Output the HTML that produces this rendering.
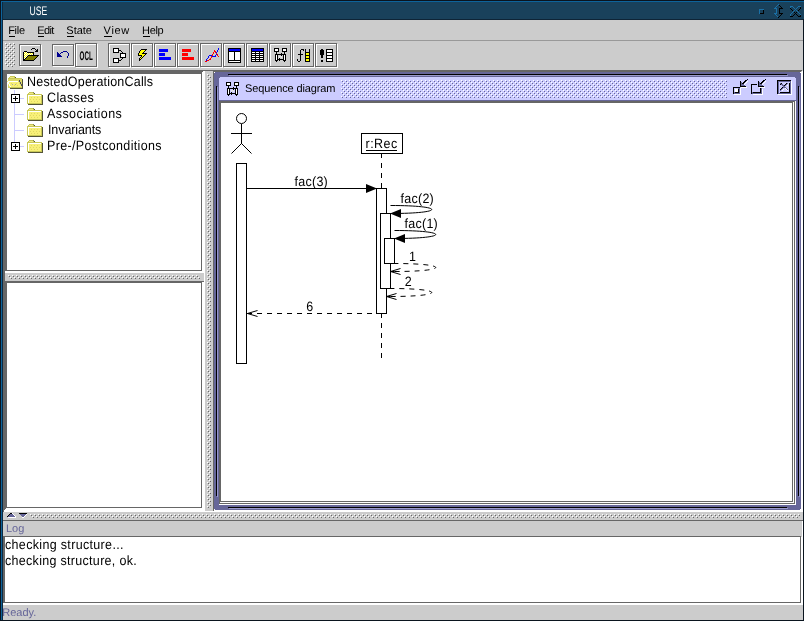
<!DOCTYPE html>
<html lang="en"><head><meta charset="utf-8"><title>USE</title>
<style>
html,body{margin:0;padding:0;background:#ccc;overflow:hidden}
#app{position:relative;width:804px;height:621px;overflow:hidden;font-family:"Liberation Sans",sans-serif}
#gfx{position:absolute;left:0;top:0;will-change:transform}
.t{position:absolute;white-space:pre;line-height:0;height:0;transform-origin:0 0;display:block}
</style></head><body>
<div id="app">
<svg id="gfx" width="804" height="621" viewBox="0 0 804 621" shape-rendering="crispEdges">
<defs>
<pattern id="bt" x="5" y="43" width="4" height="4" patternUnits="userSpaceOnUse"><rect x="0" y="0" width="1" height="1" fill="#ffffff"/><rect x="2" y="2" width="1" height="1" fill="#ffffff"/><rect x="1" y="1" width="1" height="1" fill="#666666"/><rect x="3" y="3" width="1" height="1" fill="#666666"/></pattern>
<pattern id="bh" x="8" y="275" width="4" height="4" patternUnits="userSpaceOnUse"><rect x="0" y="0" width="1" height="1" fill="#ffffff"/><rect x="2" y="2" width="1" height="1" fill="#ffffff"/><rect x="1" y="1" width="1" height="1" fill="#666666"/><rect x="3" y="3" width="1" height="1" fill="#666666"/></pattern>
<pattern id="bv" x="207" y="74" width="4" height="4" patternUnits="userSpaceOnUse"><rect x="0" y="0" width="1" height="1" fill="#ffffff"/><rect x="2" y="2" width="1" height="1" fill="#ffffff"/><rect x="1" y="1" width="1" height="1" fill="#666666"/><rect x="3" y="3" width="1" height="1" fill="#666666"/></pattern>
<pattern id="bf" x="341" y="80" width="4" height="4" patternUnits="userSpaceOnUse"><rect x="0" y="0" width="1" height="1" fill="#ffffff"/><rect x="2" y="2" width="1" height="1" fill="#ffffff"/><rect x="1" y="1" width="1" height="1" fill="#666699"/><rect x="3" y="3" width="1" height="1" fill="#666699"/></pattern>
<pattern id="bb" x="30" y="514" width="4" height="4" patternUnits="userSpaceOnUse"><rect x="0" y="0" width="1" height="1" fill="#ffffff"/><rect x="2" y="2" width="1" height="1" fill="#ffffff"/><rect x="1" y="1" width="1" height="1" fill="#666666"/><rect x="3" y="3" width="1" height="1" fill="#666666"/></pattern>
</defs>
<rect x="0" y="0" width="804" height="621" fill="#cccccc"/>
<rect x="0" y="0" width="804" height="20" fill="#19415b"/>
<rect x="0" y="0" width="804" height="1" fill="#0a141e"/>
<rect x="1" y="1" width="803" height="1" fill="#0d639b"/>
<rect x="2" y="19" width="802" height="1" fill="#0e2436"/>
<rect x="0" y="0" width="1" height="621" fill="#0a141e"/>
<rect x="1" y="1" width="1" height="620" fill="#0d639b"/>
<rect x="2" y="2" width="1" height="619" fill="#0e2a40"/>
<rect x="803" y="19" width="1" height="602" fill="#0a141e"/>
<rect x="0" y="620" width="804" height="1" fill="#0a141e"/>
<rect x="3" y="40" width="800" height="1" fill="#999999"/>
<rect x="5" y="43" width="10" height="24" fill="url(#bt)"/>
<rect x="19" y="44" width="22" height="1" fill="#666666"/>
<rect x="19" y="65" width="22" height="1" fill="#666666"/>
<rect x="19" y="44" width="1" height="22" fill="#666666"/>
<rect x="40" y="44" width="1" height="22" fill="#666666"/>
<rect x="20" y="45" width="20" height="1" fill="#ffffff"/>
<rect x="20" y="45" width="1" height="20" fill="#ffffff"/>
<rect x="20" y="66" width="22" height="1" fill="#ffffff"/>
<rect x="41" y="45" width="1" height="22" fill="#ffffff"/>
<rect x="52" y="44" width="22" height="1" fill="#666666"/>
<rect x="52" y="65" width="22" height="1" fill="#666666"/>
<rect x="52" y="44" width="1" height="22" fill="#666666"/>
<rect x="73" y="44" width="1" height="22" fill="#666666"/>
<rect x="53" y="45" width="20" height="1" fill="#ffffff"/>
<rect x="53" y="45" width="1" height="20" fill="#ffffff"/>
<rect x="53" y="66" width="22" height="1" fill="#ffffff"/>
<rect x="74" y="45" width="1" height="22" fill="#ffffff"/>
<rect x="75" y="43" width="22" height="1" fill="#666666"/>
<rect x="75" y="66" width="22" height="1" fill="#666666"/>
<rect x="75" y="43" width="1" height="24" fill="#666666"/>
<rect x="96" y="43" width="1" height="24" fill="#666666"/>
<rect x="76" y="44" width="20" height="1" fill="#ffffff"/>
<rect x="76" y="44" width="1" height="22" fill="#ffffff"/>
<rect x="76" y="67" width="22" height="1" fill="#ffffff"/>
<rect x="97" y="44" width="1" height="24" fill="#ffffff"/>
<rect x="108" y="43" width="22" height="1" fill="#666666"/>
<rect x="108" y="66" width="22" height="1" fill="#666666"/>
<rect x="108" y="43" width="1" height="24" fill="#666666"/>
<rect x="129" y="43" width="1" height="24" fill="#666666"/>
<rect x="109" y="44" width="20" height="1" fill="#ffffff"/>
<rect x="109" y="44" width="1" height="22" fill="#ffffff"/>
<rect x="109" y="67" width="22" height="1" fill="#ffffff"/>
<rect x="130" y="44" width="1" height="24" fill="#ffffff"/>
<rect x="131" y="43" width="22" height="1" fill="#666666"/>
<rect x="131" y="66" width="22" height="1" fill="#666666"/>
<rect x="131" y="43" width="1" height="24" fill="#666666"/>
<rect x="152" y="43" width="1" height="24" fill="#666666"/>
<rect x="132" y="44" width="20" height="1" fill="#ffffff"/>
<rect x="132" y="44" width="1" height="22" fill="#ffffff"/>
<rect x="132" y="67" width="22" height="1" fill="#ffffff"/>
<rect x="153" y="44" width="1" height="24" fill="#ffffff"/>
<rect x="154" y="43" width="22" height="1" fill="#666666"/>
<rect x="154" y="66" width="22" height="1" fill="#666666"/>
<rect x="154" y="43" width="1" height="24" fill="#666666"/>
<rect x="175" y="43" width="1" height="24" fill="#666666"/>
<rect x="155" y="44" width="20" height="1" fill="#ffffff"/>
<rect x="155" y="44" width="1" height="22" fill="#ffffff"/>
<rect x="155" y="67" width="22" height="1" fill="#ffffff"/>
<rect x="176" y="44" width="1" height="24" fill="#ffffff"/>
<rect x="177" y="43" width="22" height="1" fill="#666666"/>
<rect x="177" y="66" width="22" height="1" fill="#666666"/>
<rect x="177" y="43" width="1" height="24" fill="#666666"/>
<rect x="198" y="43" width="1" height="24" fill="#666666"/>
<rect x="178" y="44" width="20" height="1" fill="#ffffff"/>
<rect x="178" y="44" width="1" height="22" fill="#ffffff"/>
<rect x="178" y="67" width="22" height="1" fill="#ffffff"/>
<rect x="199" y="44" width="1" height="24" fill="#ffffff"/>
<rect x="200" y="43" width="22" height="1" fill="#666666"/>
<rect x="200" y="66" width="22" height="1" fill="#666666"/>
<rect x="200" y="43" width="1" height="24" fill="#666666"/>
<rect x="221" y="43" width="1" height="24" fill="#666666"/>
<rect x="201" y="44" width="20" height="1" fill="#ffffff"/>
<rect x="201" y="44" width="1" height="22" fill="#ffffff"/>
<rect x="201" y="67" width="22" height="1" fill="#ffffff"/>
<rect x="222" y="44" width="1" height="24" fill="#ffffff"/>
<rect x="223" y="43" width="22" height="1" fill="#666666"/>
<rect x="223" y="66" width="22" height="1" fill="#666666"/>
<rect x="223" y="43" width="1" height="24" fill="#666666"/>
<rect x="244" y="43" width="1" height="24" fill="#666666"/>
<rect x="224" y="44" width="20" height="1" fill="#ffffff"/>
<rect x="224" y="44" width="1" height="22" fill="#ffffff"/>
<rect x="224" y="67" width="22" height="1" fill="#ffffff"/>
<rect x="245" y="44" width="1" height="24" fill="#ffffff"/>
<rect x="246" y="43" width="22" height="1" fill="#666666"/>
<rect x="246" y="66" width="22" height="1" fill="#666666"/>
<rect x="246" y="43" width="1" height="24" fill="#666666"/>
<rect x="267" y="43" width="1" height="24" fill="#666666"/>
<rect x="247" y="44" width="20" height="1" fill="#ffffff"/>
<rect x="247" y="44" width="1" height="22" fill="#ffffff"/>
<rect x="247" y="67" width="22" height="1" fill="#ffffff"/>
<rect x="268" y="44" width="1" height="24" fill="#ffffff"/>
<rect x="269" y="43" width="22" height="1" fill="#666666"/>
<rect x="269" y="66" width="22" height="1" fill="#666666"/>
<rect x="269" y="43" width="1" height="24" fill="#666666"/>
<rect x="290" y="43" width="1" height="24" fill="#666666"/>
<rect x="270" y="44" width="20" height="1" fill="#ffffff"/>
<rect x="270" y="44" width="1" height="22" fill="#ffffff"/>
<rect x="270" y="67" width="22" height="1" fill="#ffffff"/>
<rect x="291" y="44" width="1" height="24" fill="#ffffff"/>
<rect x="292" y="43" width="22" height="1" fill="#666666"/>
<rect x="292" y="66" width="22" height="1" fill="#666666"/>
<rect x="292" y="43" width="1" height="24" fill="#666666"/>
<rect x="313" y="43" width="1" height="24" fill="#666666"/>
<rect x="293" y="44" width="20" height="1" fill="#ffffff"/>
<rect x="293" y="44" width="1" height="22" fill="#ffffff"/>
<rect x="293" y="67" width="22" height="1" fill="#ffffff"/>
<rect x="314" y="44" width="1" height="24" fill="#ffffff"/>
<rect x="315" y="43" width="22" height="1" fill="#666666"/>
<rect x="315" y="66" width="22" height="1" fill="#666666"/>
<rect x="315" y="43" width="1" height="24" fill="#666666"/>
<rect x="336" y="43" width="1" height="24" fill="#666666"/>
<rect x="316" y="44" width="20" height="1" fill="#ffffff"/>
<rect x="316" y="44" width="1" height="22" fill="#ffffff"/>
<rect x="316" y="67" width="22" height="1" fill="#ffffff"/>
<rect x="337" y="44" width="1" height="24" fill="#ffffff"/>
<rect x="24" y="51" width="3" height="1" fill="#000000"/>
<rect x="23" y="52" width="1" height="9" fill="#000000"/>
<rect x="27" y="52" width="7" height="1" fill="#000000"/>
<rect x="33" y="52" width="1" height="4" fill="#000000"/>
<rect x="24" y="52" width="3" height="7" fill="#ffff00"/>
<rect x="27" y="53" width="6" height="2" fill="#ffff00"/>
<rect x="24" y="52" width="1" height="1" fill="#ffffff"/>
<rect x="26" y="52" width="1" height="1" fill="#ffffff"/>
<rect x="25" y="53" width="1" height="1" fill="#ffffff"/>
<rect x="27" y="53" width="1" height="1" fill="#ffffff"/>
<rect x="29" y="53" width="1" height="1" fill="#ffffff"/>
<rect x="31" y="53" width="1" height="1" fill="#ffffff"/>
<rect x="24" y="54" width="1" height="1" fill="#ffffff"/>
<rect x="26" y="54" width="1" height="1" fill="#ffffff"/>
<rect x="28" y="54" width="1" height="1" fill="#ffffff"/>
<rect x="30" y="54" width="1" height="1" fill="#ffffff"/>
<rect x="32" y="54" width="1" height="1" fill="#ffffff"/>
<rect x="25" y="55" width="1" height="1" fill="#ffffff"/>
<rect x="24" y="56" width="1" height="1" fill="#ffffff"/>
<rect x="26" y="56" width="1" height="1" fill="#ffffff"/>
<rect x="25" y="57" width="1" height="1" fill="#ffffff"/>
<rect x="24" y="58" width="1" height="1" fill="#ffffff"/>
<rect x="28" y="55" width="11" height="1" fill="#000000"/>
<rect x="28" y="56" width="9" height="1" fill="#808000"/>
<rect x="27" y="56" width="1" height="1" fill="#000000"/>
<rect x="37" y="56" width="1" height="1" fill="#000000"/>
<rect x="27" y="57" width="9" height="1" fill="#808000"/>
<rect x="26" y="57" width="1" height="1" fill="#000000"/>
<rect x="36" y="57" width="1" height="1" fill="#000000"/>
<rect x="26" y="58" width="9" height="1" fill="#808000"/>
<rect x="25" y="58" width="1" height="1" fill="#000000"/>
<rect x="35" y="58" width="1" height="1" fill="#000000"/>
<rect x="25" y="59" width="9" height="1" fill="#808000"/>
<rect x="24" y="59" width="1" height="1" fill="#000000"/>
<rect x="34" y="59" width="1" height="1" fill="#000000"/>
<rect x="23" y="60" width="11" height="1" fill="#000000"/>
<rect x="31" y="49" width="1" height="1" fill="#000000"/>
<rect x="32" y="48" width="3" height="1" fill="#000000"/>
<rect x="35" y="49" width="1" height="1" fill="#000000"/>
<rect x="37" y="49" width="1" height="1" fill="#000000"/>
<rect x="36" y="50" width="2" height="1" fill="#000000"/>
<rect x="35" y="51" width="3" height="1" fill="#000000"/>
<rect x="57" y="52" width="1" height="1" fill="#000090"/>
<rect x="57" y="53" width="2" height="1" fill="#000090"/>
<rect x="57" y="54" width="3" height="1" fill="#000090"/>
<rect x="57" y="55" width="4" height="1" fill="#000090"/>
<rect x="57" y="56" width="5" height="1" fill="#000090"/>
<rect x="60" y="53" width="1" height="1" fill="#000090"/>
<rect x="61" y="52" width="1" height="1" fill="#000090"/>
<rect x="62" y="52" width="1" height="1" fill="#000090"/>
<rect x="63" y="51" width="4" height="1" fill="#000090"/>
<rect x="67" y="52" width="1" height="1" fill="#000090"/>
<rect x="68" y="53" width="1" height="3" fill="#000090"/>
<rect x="67" y="56" width="1" height="2" fill="#000090"/>
<rect x="113" y="48" width="6" height="5" fill="#ffffff"/>
<rect x="113" y="48" width="6" height="1" fill="#000000"/>
<rect x="113" y="52" width="6" height="1" fill="#000000"/>
<rect x="113" y="48" width="1" height="5" fill="#000000"/>
<rect x="118" y="48" width="1" height="5" fill="#000000"/>
<rect x="120" y="53" width="6" height="5" fill="#ffffff"/>
<rect x="120" y="53" width="6" height="1" fill="#000000"/>
<rect x="120" y="57" width="6" height="1" fill="#000000"/>
<rect x="120" y="53" width="1" height="5" fill="#000000"/>
<rect x="125" y="53" width="1" height="5" fill="#000000"/>
<rect x="113" y="58" width="6" height="5" fill="#ffffff"/>
<rect x="113" y="58" width="6" height="1" fill="#000000"/>
<rect x="113" y="62" width="6" height="1" fill="#000000"/>
<rect x="113" y="58" width="1" height="5" fill="#000000"/>
<rect x="118" y="58" width="1" height="5" fill="#000000"/>
<rect x="119" y="50" width="1" height="1" fill="#000000"/>
<rect x="120" y="50" width="1" height="1" fill="#000000"/>
<rect x="121" y="51" width="1" height="1" fill="#000000"/>
<rect x="122" y="52" width="1" height="1" fill="#000000"/>
<rect x="119" y="60" width="1" height="1" fill="#000000"/>
<rect x="120" y="60" width="1" height="1" fill="#000000"/>
<rect x="121" y="59" width="1" height="1" fill="#000000"/>
<rect x="122" y="58" width="1" height="1" fill="#000000"/>
<rect x="141" y="49" width="6" height="1" fill="#000000"/>
<rect x="140" y="50" width="1" height="1" fill="#000000"/>
<rect x="141" y="50" width="4" height="1" fill="#ffff00"/>
<rect x="145" y="50" width="1" height="1" fill="#000000"/>
<rect x="139" y="51" width="1" height="1" fill="#000000"/>
<rect x="140" y="51" width="4" height="1" fill="#ffff00"/>
<rect x="144" y="51" width="1" height="1" fill="#000000"/>
<rect x="139" y="52" width="1" height="1" fill="#000000"/>
<rect x="140" y="52" width="3" height="1" fill="#ffff00"/>
<rect x="143" y="52" width="1" height="1" fill="#000000"/>
<rect x="138" y="53" width="1" height="1" fill="#000000"/>
<rect x="139" y="53" width="3" height="1" fill="#ffff00"/>
<rect x="142" y="53" width="5" height="1" fill="#000000"/>
<rect x="138" y="54" width="1" height="1" fill="#000000"/>
<rect x="139" y="54" width="6" height="1" fill="#ffff00"/>
<rect x="145" y="54" width="1" height="1" fill="#000000"/>
<rect x="138" y="55" width="4" height="1" fill="#000000"/>
<rect x="142" y="55" width="2" height="1" fill="#ffff00"/>
<rect x="144" y="55" width="1" height="1" fill="#000000"/>
<rect x="141" y="56" width="1" height="1" fill="#000000"/>
<rect x="142" y="56" width="1" height="1" fill="#ffff00"/>
<rect x="143" y="56" width="1" height="1" fill="#000000"/>
<rect x="140" y="57" width="1" height="1" fill="#000000"/>
<rect x="141" y="57" width="1" height="1" fill="#ffff00"/>
<rect x="142" y="57" width="1" height="1" fill="#000000"/>
<rect x="139" y="58" width="1" height="1" fill="#000000"/>
<rect x="140" y="58" width="1" height="1" fill="#ffff00"/>
<rect x="141" y="58" width="1" height="1" fill="#000000"/>
<rect x="139" y="59" width="2" height="1" fill="#000000"/>
<rect x="139" y="60" width="1" height="1" fill="#000000"/>
<rect x="159" y="49" width="9" height="3" fill="#0000ff"/>
<rect x="159" y="53" width="6" height="3" fill="#0000ff"/>
<rect x="159" y="57" width="12" height="3" fill="#0000ff"/>
<rect x="182" y="49" width="9" height="3" fill="#ff0000"/>
<rect x="182" y="53" width="6" height="3" fill="#ff0000"/>
<rect x="182" y="57" width="12" height="3" fill="#ff0000"/>
<rect x="218" y="48" width="1" height="1" fill="#0000ff"/>
<rect x="218" y="49" width="1" height="1" fill="#0000ff"/>
<rect x="217" y="50" width="1" height="1" fill="#0000ff"/>
<rect x="217" y="51" width="1" height="1" fill="#0000ff"/>
<rect x="216" y="52" width="1" height="1" fill="#0000ff"/>
<rect x="216" y="54" width="1" height="1" fill="#0000ff"/>
<rect x="215" y="55" width="1" height="1" fill="#0000ff"/>
<rect x="215" y="56" width="1" height="1" fill="#0000ff"/>
<rect x="212" y="56" width="1" height="1" fill="#0000ff"/>
<rect x="213" y="56" width="1" height="1" fill="#0000ff"/>
<rect x="214" y="56" width="1" height="1" fill="#0000ff"/>
<rect x="209" y="55" width="1" height="1" fill="#0000ff"/>
<rect x="210" y="55" width="1" height="1" fill="#0000ff"/>
<rect x="211" y="55" width="1" height="1" fill="#0000ff"/>
<rect x="208" y="56" width="1" height="1" fill="#0000ff"/>
<rect x="208" y="57" width="1" height="1" fill="#0000ff"/>
<rect x="207" y="58" width="1" height="1" fill="#0000ff"/>
<rect x="206" y="59" width="1" height="1" fill="#0000ff"/>
<rect x="206" y="60" width="1" height="1" fill="#0000ff"/>
<rect x="205" y="61" width="1" height="1" fill="#ff0000"/>
<rect x="206" y="61" width="1" height="1" fill="#ff0000"/>
<rect x="207" y="60" width="1" height="1" fill="#ff0000"/>
<rect x="208" y="60" width="1" height="1" fill="#ff0000"/>
<rect x="209" y="59" width="1" height="1" fill="#ff0000"/>
<rect x="210" y="59" width="1" height="1" fill="#ff0000"/>
<rect x="210" y="58" width="1" height="1" fill="#ff0000"/>
<rect x="211" y="57" width="1" height="1" fill="#ff0000"/>
<rect x="211" y="56" width="1" height="1" fill="#ff0000"/>
<rect x="212" y="55" width="1" height="1" fill="#ff0000"/>
<rect x="212" y="54" width="1" height="1" fill="#ff0000"/>
<rect x="213" y="53" width="1" height="1" fill="#ff0000"/>
<rect x="213" y="52" width="1" height="1" fill="#ff0000"/>
<rect x="214" y="51" width="1" height="1" fill="#ff0000"/>
<rect x="214" y="50" width="1" height="1" fill="#ff0000"/>
<rect x="215" y="51" width="1" height="1" fill="#ff0000"/>
<rect x="215" y="52" width="1" height="1" fill="#ff0000"/>
<rect x="216" y="53" width="1" height="1" fill="#ff0000"/>
<rect x="217" y="54" width="1" height="1" fill="#ff0000"/>
<rect x="217" y="55" width="1" height="1" fill="#ff0000"/>
<rect x="218" y="56" width="1" height="1" fill="#ff0000"/>
<rect x="228" y="48" width="13" height="15" fill="#ffffff"/>
<rect x="228" y="48" width="13" height="1" fill="#000000"/>
<rect x="228" y="62" width="13" height="1" fill="#000000"/>
<rect x="228" y="48" width="1" height="15" fill="#000000"/>
<rect x="240" y="48" width="1" height="15" fill="#000000"/>
<rect x="229" y="49" width="11" height="2" fill="#0000ff"/>
<rect x="228" y="51" width="13" height="1" fill="#000000"/>
<rect x="234" y="51" width="1" height="10" fill="#000000"/>
<rect x="228" y="60" width="13" height="1" fill="#000000"/>
<rect x="251" y="48" width="13" height="14" fill="#000000"/>
<rect x="252" y="49" width="11" height="2" fill="#0000ff"/>
<rect x="252" y="52" width="3" height="1" fill="#ffffff"/>
<rect x="252" y="54" width="3" height="1" fill="#ffffff"/>
<rect x="252" y="56" width="3" height="1" fill="#ffffff"/>
<rect x="252" y="58" width="3" height="1" fill="#ffffff"/>
<rect x="252" y="60" width="3" height="1" fill="#ffffff"/>
<rect x="256" y="52" width="3" height="1" fill="#ffffff"/>
<rect x="256" y="54" width="3" height="1" fill="#ffffff"/>
<rect x="256" y="56" width="3" height="1" fill="#ffffff"/>
<rect x="256" y="58" width="3" height="1" fill="#ffffff"/>
<rect x="256" y="60" width="3" height="1" fill="#ffffff"/>
<rect x="260" y="52" width="3" height="1" fill="#ffffff"/>
<rect x="260" y="54" width="3" height="1" fill="#ffffff"/>
<rect x="260" y="56" width="3" height="1" fill="#ffffff"/>
<rect x="260" y="58" width="3" height="1" fill="#ffffff"/>
<rect x="260" y="60" width="3" height="1" fill="#ffffff"/>
<rect x="274" y="48" width="5" height="4" fill="#ffffff"/>
<rect x="274" y="48" width="5" height="1" fill="#000000"/>
<rect x="274" y="51" width="5" height="1" fill="#000000"/>
<rect x="274" y="48" width="1" height="4" fill="#000000"/>
<rect x="278" y="48" width="1" height="4" fill="#000000"/>
<rect x="282" y="48" width="5" height="4" fill="#ffffff"/>
<rect x="282" y="48" width="5" height="1" fill="#000000"/>
<rect x="282" y="51" width="5" height="1" fill="#000000"/>
<rect x="282" y="48" width="1" height="4" fill="#000000"/>
<rect x="286" y="48" width="1" height="4" fill="#000000"/>
<rect x="276" y="52" width="1" height="2" fill="#000000"/>
<rect x="275" y="54" width="3" height="7" fill="#000000"/>
<rect x="276" y="55" width="1" height="5" fill="#ffffff"/>
<rect x="276" y="61" width="1" height="1" fill="#000000"/>
<rect x="284" y="52" width="1" height="2" fill="#000000"/>
<rect x="283" y="54" width="3" height="7" fill="#000000"/>
<rect x="284" y="55" width="1" height="5" fill="#ffffff"/>
<rect x="284" y="61" width="1" height="1" fill="#000000"/>
<rect x="278" y="54" width="5" height="1" fill="#000000"/>
<rect x="281" y="53" width="1" height="1" fill="#000000"/>
<rect x="281" y="55" width="1" height="1" fill="#000000"/>
<rect x="278" y="59" width="5" height="1" fill="#000000"/>
<rect x="279" y="58" width="1" height="1" fill="#000000"/>
<rect x="279" y="60" width="1" height="1" fill="#000000"/>
<rect x="279" y="56" width="1" height="1" fill="#e6e6e6"/>
<rect x="280" y="56" width="1" height="1" fill="#e6e6e6"/>
<rect x="281" y="56" width="1" height="1" fill="#e6e6e6"/>
<rect x="279" y="57" width="1" height="1" fill="#e6e6e6"/>
<rect x="281" y="57" width="1" height="1" fill="#e6e6e6"/>
<rect x="301" y="49" width="3" height="1" fill="#000000"/>
<rect x="303" y="50" width="1" height="1" fill="#000000"/>
<rect x="300" y="50" width="1" height="11" fill="#000000"/>
<rect x="298" y="54" width="5" height="1" fill="#000000"/>
<rect x="299" y="61" width="1" height="1" fill="#000000"/>
<rect x="298" y="61" width="1" height="1" fill="#000000"/>
<rect x="297" y="60" width="1" height="1" fill="#000000"/>
<rect x="297" y="59" width="1" height="1" fill="#000000"/>
<rect x="305" y="49" width="1" height="13" fill="#000000"/>
<rect x="309" y="49" width="1" height="13" fill="#000000"/>
<rect x="305" y="52" width="5" height="1" fill="#000000"/>
<rect x="305" y="55" width="5" height="1" fill="#000000"/>
<rect x="305" y="58" width="5" height="1" fill="#000000"/>
<rect x="305" y="61" width="5" height="1" fill="#000000"/>
<rect x="306" y="53" width="3" height="2" fill="#ffff00"/>
<rect x="306" y="56" width="3" height="2" fill="#ffff00"/>
<rect x="306" y="59" width="3" height="2" fill="#ffff00"/>
<rect x="321" y="49" width="2" height="1" fill="#000000"/>
<rect x="320" y="50" width="4" height="5" fill="#000000"/>
<rect x="321" y="55" width="2" height="3" fill="#000000"/>
<rect x="321" y="60" width="2" height="2" fill="#000000"/>
<rect x="326" y="49" width="7" height="13" fill="#ffffff"/>
<rect x="326" y="49" width="7" height="1" fill="#000000"/>
<rect x="326" y="61" width="7" height="1" fill="#000000"/>
<rect x="326" y="49" width="1" height="13" fill="#000000"/>
<rect x="332" y="49" width="1" height="13" fill="#000000"/>
<rect x="326" y="52" width="7" height="1" fill="#000000"/>
<rect x="326" y="55" width="7" height="1" fill="#000000"/>
<rect x="326" y="58" width="7" height="1" fill="#000000"/>
<rect x="3" y="70" width="799" height="1" fill="#666666"/>
<rect x="3" y="70" width="202" height="442" fill="#666666"/>
<rect x="7" y="74" width="198" height="198" fill="#ffffff"/>
<rect x="5" y="271" width="200" height="2" fill="#ffffff"/>
<rect x="201" y="74" width="1" height="197" fill="#666666"/>
<rect x="7" y="270" width="195" height="1" fill="#666666"/>
<rect x="202" y="71" width="3" height="3" fill="#ffffff"/>
<rect x="202" y="71" width="1" height="1" fill="#666666"/>
<rect x="5" y="273" width="199" height="8" fill="#cccccc"/>
<rect x="204" y="273" width="1" height="8" fill="#ffffff"/>
<rect x="8" y="275" width="192" height="4" fill="url(#bh)"/>
<rect x="5" y="281" width="199" height="1" fill="#666666"/>
<rect x="5" y="282" width="197" height="1" fill="#666666"/>
<rect x="7" y="283" width="198" height="229" fill="#ffffff"/>
<rect x="201" y="283" width="1" height="225" fill="#666666"/>
<rect x="7" y="507" width="195" height="1" fill="#666666"/>
<rect x="204" y="281" width="1" height="2" fill="#ffffff"/>
<rect x="203" y="282" width="1" height="1" fill="#ffffff"/>
<rect x="202" y="282" width="1" height="1" fill="#ffffff"/>
<rect x="6" y="508" width="199" height="1" fill="#ffffff"/>
<rect x="5" y="509" width="200" height="1" fill="#ffffff"/>
<rect x="4" y="510" width="201" height="1" fill="#ffffff"/>
<rect x="4" y="511" width="201" height="1" fill="#ffffff"/>
<rect x="205" y="71" width="8" height="440" fill="#cccccc"/>
<rect x="205" y="511" width="8" height="1" fill="#ffffff"/>
<rect x="207" y="74" width="4" height="434" fill="url(#bv)"/>
<rect x="213" y="71" width="1" height="439" fill="#666666"/>
<rect x="213" y="71" width="588" height="1" fill="#666666"/>
<rect x="214" y="72" width="587" height="438" fill="#666699"/>
<rect x="801" y="72" width="1" height="439" fill="#ffffff"/>
<rect x="214" y="510" width="588" height="1" fill="#ffffff"/>
<rect x="802" y="71" width="1" height="441" fill="#ffffff"/>
<rect x="205" y="511" width="598" height="1" fill="#ffffff"/>
<rect x="213" y="510" width="1" height="1" fill="#666666"/>
<rect x="214" y="72" width="1" height="1" fill="#ffffff"/>
<rect x="800" y="72" width="1" height="1" fill="#ffffff"/>
<rect x="214" y="509" width="1" height="1" fill="#ffffff"/>
<rect x="800" y="509" width="1" height="1" fill="#ffffff"/>
<rect x="228" y="74" width="559" height="1" fill="#000000"/>
<rect x="229" y="75" width="559" height="1" fill="#9999cc"/>
<rect x="216" y="86" width="1" height="410" fill="#000000"/>
<rect x="217" y="87" width="1" height="410" fill="#9999cc"/>
<rect x="798" y="86" width="1" height="410" fill="#000000"/>
<rect x="799" y="87" width="1" height="410" fill="#9999cc"/>
<rect x="228" y="507" width="559" height="1" fill="#000000"/>
<rect x="229" y="508" width="559" height="1" fill="#9999cc"/>
<rect x="219" y="77" width="577" height="24" fill="#ccccff"/>
<rect x="219" y="100" width="577" height="1" fill="#666699"/>
<rect x="219" y="77" width="1" height="1" fill="#666699"/>
<rect x="795" y="77" width="1" height="1" fill="#666699"/>
<rect x="341" y="80" width="386" height="18" fill="url(#bf)"/>
<rect x="219" y="101" width="577" height="404" fill="#ffffff"/>
<rect x="219" y="101" width="576" height="1" fill="#666666"/>
<rect x="219" y="101" width="1" height="403" fill="#666666"/>
<rect x="219" y="503" width="576" height="1" fill="#666666"/>
<rect x="794" y="101" width="1" height="403" fill="#666666"/>
<rect x="220" y="102" width="573" height="1" fill="#666666"/>
<rect x="220" y="102" width="1" height="400" fill="#666666"/>
<rect x="220" y="501" width="573" height="1" fill="#666666"/>
<rect x="792" y="102" width="1" height="400" fill="#666666"/>
<rect x="226" y="82" width="5" height="4" fill="#ffffff"/>
<rect x="226" y="82" width="5" height="1" fill="#000000"/>
<rect x="226" y="85" width="5" height="1" fill="#000000"/>
<rect x="226" y="82" width="1" height="4" fill="#000000"/>
<rect x="230" y="82" width="1" height="4" fill="#000000"/>
<rect x="234" y="82" width="5" height="4" fill="#ffffff"/>
<rect x="234" y="82" width="5" height="1" fill="#000000"/>
<rect x="234" y="85" width="5" height="1" fill="#000000"/>
<rect x="234" y="82" width="1" height="4" fill="#000000"/>
<rect x="238" y="82" width="1" height="4" fill="#000000"/>
<rect x="228" y="86" width="1" height="2" fill="#000000"/>
<rect x="227" y="88" width="3" height="7" fill="#000000"/>
<rect x="228" y="89" width="1" height="5" fill="#ffffff"/>
<rect x="228" y="95" width="1" height="1" fill="#000000"/>
<rect x="236" y="86" width="1" height="2" fill="#000000"/>
<rect x="235" y="88" width="3" height="7" fill="#000000"/>
<rect x="236" y="89" width="1" height="5" fill="#ffffff"/>
<rect x="236" y="95" width="1" height="1" fill="#000000"/>
<rect x="230" y="88" width="5" height="1" fill="#000000"/>
<rect x="233" y="87" width="1" height="1" fill="#000000"/>
<rect x="233" y="89" width="1" height="1" fill="#000000"/>
<rect x="230" y="93" width="5" height="1" fill="#000000"/>
<rect x="231" y="92" width="1" height="1" fill="#000000"/>
<rect x="231" y="94" width="1" height="1" fill="#000000"/>
<rect x="231" y="90" width="1" height="1" fill="#e6e6e6"/>
<rect x="232" y="90" width="1" height="1" fill="#e6e6e6"/>
<rect x="233" y="90" width="1" height="1" fill="#e6e6e6"/>
<rect x="231" y="91" width="1" height="1" fill="#e6e6e6"/>
<rect x="233" y="91" width="1" height="1" fill="#e6e6e6"/>
<rect x="734" y="88" width="5" height="5" fill="#666699"/>
<rect x="733" y="87" width="7" height="1" fill="#000000"/>
<rect x="733" y="87" width="1" height="7" fill="#000000"/>
<rect x="735" y="90" width="2" height="2" fill="#ffffff"/>
<rect x="734" y="88" width="1" height="1" fill="#ccccff"/>
<rect x="735" y="88" width="3" height="1" fill="#ccccff"/>
<rect x="734" y="89" width="1" height="3" fill="#ccccff"/>
<rect x="735" y="89" width="3" height="1" fill="#ffffff"/>
<rect x="737" y="90" width="1" height="1" fill="#ffffff"/>
<rect x="737" y="91" width="1" height="1" fill="#ffffff"/>
<rect x="738" y="89" width="1" height="4" fill="#000000"/>
<rect x="735" y="92" width="4" height="1" fill="#000000"/>
<rect x="734" y="93" width="6" height="1" fill="#666699"/>
<rect x="739" y="88" width="1" height="6" fill="#666699"/>
<rect x="740" y="88" width="1" height="7" fill="#ffffff"/>
<rect x="734" y="94" width="7" height="1" fill="#ffffff"/>
<rect x="740" y="81" width="1" height="6" fill="#000000"/>
<rect x="740" y="86" width="6" height="1" fill="#000000"/>
<rect x="741" y="82" width="1" height="1" fill="#666699"/>
<rect x="741" y="83" width="2" height="1" fill="#666699"/>
<rect x="741" y="84" width="3" height="1" fill="#666699"/>
<rect x="741" y="85" width="4" height="1" fill="#666699"/>
<rect x="746" y="80" width="1" height="1" fill="#000000"/>
<rect x="745" y="80" width="1" height="1" fill="#000000"/>
<rect x="745" y="81" width="1" height="1" fill="#000000"/>
<rect x="744" y="81" width="1" height="1" fill="#000000"/>
<rect x="744" y="82" width="1" height="1" fill="#000000"/>
<rect x="743" y="82" width="1" height="1" fill="#000000"/>
<rect x="743" y="83" width="1" height="1" fill="#000000"/>
<rect x="742" y="83" width="1" height="1" fill="#000000"/>
<rect x="747" y="79" width="1" height="1" fill="#000000"/>
<rect x="741" y="87" width="6" height="1" fill="#ffffff"/>
<rect x="747" y="81" width="1" height="1" fill="#ffffff"/>
<rect x="746" y="82" width="1" height="1" fill="#ffffff"/>
<rect x="745" y="83" width="1" height="1" fill="#ffffff"/>
<rect x="744" y="84" width="1" height="1" fill="#ffffff"/>
<rect x="751" y="84" width="6" height="1" fill="#000000"/>
<rect x="751" y="84" width="1" height="10" fill="#000000"/>
<rect x="753" y="92" width="8" height="1" fill="#000000"/>
<rect x="760" y="88" width="1" height="5" fill="#000000"/>
<rect x="752" y="93" width="10" height="1" fill="#666699"/>
<rect x="761" y="88" width="1" height="6" fill="#666699"/>
<rect x="752" y="92" width="1" height="1" fill="#666699"/>
<rect x="762" y="89" width="1" height="6" fill="#ffffff"/>
<rect x="753" y="94" width="10" height="1" fill="#ffffff"/>
<rect x="758" y="81" width="1" height="6" fill="#000000"/>
<rect x="758" y="86" width="6" height="1" fill="#000000"/>
<rect x="759" y="82" width="1" height="1" fill="#666699"/>
<rect x="759" y="83" width="2" height="1" fill="#666699"/>
<rect x="759" y="84" width="3" height="1" fill="#666699"/>
<rect x="759" y="85" width="4" height="1" fill="#666699"/>
<rect x="764" y="80" width="1" height="1" fill="#000000"/>
<rect x="763" y="80" width="1" height="1" fill="#000000"/>
<rect x="763" y="81" width="1" height="1" fill="#000000"/>
<rect x="762" y="81" width="1" height="1" fill="#000000"/>
<rect x="762" y="82" width="1" height="1" fill="#000000"/>
<rect x="761" y="82" width="1" height="1" fill="#000000"/>
<rect x="761" y="83" width="1" height="1" fill="#000000"/>
<rect x="760" y="83" width="1" height="1" fill="#000000"/>
<rect x="765" y="79" width="1" height="1" fill="#000000"/>
<rect x="759" y="87" width="6" height="1" fill="#ffffff"/>
<rect x="765" y="81" width="1" height="1" fill="#ffffff"/>
<rect x="764" y="82" width="1" height="1" fill="#ffffff"/>
<rect x="763" y="83" width="1" height="1" fill="#ffffff"/>
<rect x="762" y="84" width="1" height="1" fill="#ffffff"/>
<rect x="778" y="81" width="12" height="12" fill="#ccccff"/>
<rect x="777" y="80" width="14" height="1" fill="#000000"/>
<rect x="777" y="80" width="1" height="14" fill="#000000"/>
<rect x="778" y="81" width="12" height="1" fill="#666699"/>
<rect x="778" y="81" width="1" height="12" fill="#666699"/>
<rect x="789" y="83" width="1" height="10" fill="#000000"/>
<rect x="780" y="92" width="10" height="1" fill="#000000"/>
<rect x="778" y="93" width="13" height="1" fill="#666699"/>
<rect x="790" y="81" width="1" height="13" fill="#666699"/>
<rect x="791" y="81" width="1" height="14" fill="#ffffff"/>
<rect x="778" y="94" width="14" height="1" fill="#ffffff"/>
<rect x="780" y="83" width="1" height="1" fill="#666699"/>
<rect x="787" y="83" width="1" height="1" fill="#666699"/>
<rect x="781" y="84" width="1" height="1" fill="#666699"/>
<rect x="786" y="84" width="1" height="1" fill="#666699"/>
<rect x="782" y="85" width="1" height="1" fill="#666699"/>
<rect x="785" y="85" width="1" height="1" fill="#666699"/>
<rect x="783" y="86" width="1" height="1" fill="#666699"/>
<rect x="784" y="86" width="1" height="1" fill="#666699"/>
<rect x="784" y="87" width="1" height="1" fill="#666699"/>
<rect x="783" y="87" width="1" height="1" fill="#666699"/>
<rect x="785" y="88" width="1" height="1" fill="#666699"/>
<rect x="782" y="88" width="1" height="1" fill="#666699"/>
<rect x="786" y="89" width="1" height="1" fill="#666699"/>
<rect x="781" y="89" width="1" height="1" fill="#666699"/>
<rect x="787" y="90" width="1" height="1" fill="#666699"/>
<rect x="780" y="90" width="1" height="1" fill="#666699"/>
<rect x="781" y="83" width="1" height="1" fill="#666699"/>
<rect x="786" y="83" width="1" height="1" fill="#666699"/>
<rect x="782" y="84" width="1" height="1" fill="#666699"/>
<rect x="785" y="84" width="1" height="1" fill="#666699"/>
<rect x="783" y="85" width="1" height="1" fill="#666699"/>
<rect x="784" y="85" width="1" height="1" fill="#666699"/>
<rect x="784" y="86" width="1" height="1" fill="#666699"/>
<rect x="783" y="86" width="1" height="1" fill="#666699"/>
<rect x="785" y="87" width="1" height="1" fill="#666699"/>
<rect x="782" y="87" width="1" height="1" fill="#666699"/>
<rect x="786" y="88" width="1" height="1" fill="#666699"/>
<rect x="781" y="88" width="1" height="1" fill="#666699"/>
<rect x="787" y="89" width="1" height="1" fill="#666699"/>
<rect x="780" y="89" width="1" height="1" fill="#666699"/>
<rect x="780" y="84" width="1" height="1" fill="#000000"/>
<rect x="781" y="83" width="1" height="1" fill="#000000"/>
<rect x="784" y="85" width="1" height="1" fill="#000000"/>
<rect x="785" y="84" width="1" height="1" fill="#000000"/>
<rect x="786" y="83" width="1" height="1" fill="#000000"/>
<rect x="780" y="89" width="1" height="1" fill="#000000"/>
<rect x="781" y="88" width="1" height="1" fill="#000000"/>
<rect x="782" y="87" width="1" height="1" fill="#000000"/>
<rect x="785" y="88" width="1" height="1" fill="#ffffff"/>
<rect x="786" y="89" width="1" height="1" fill="#ffffff"/>
<rect x="787" y="90" width="1" height="1" fill="#ffffff"/>
<rect x="783" y="89" width="1" height="1" fill="#ffffff"/>
<rect x="782" y="90" width="1" height="1" fill="#ffffff"/>
<rect x="787" y="85" width="1" height="1" fill="#ffffff"/>
<rect x="14" y="90" width="1" height="57" fill="#ccccff"/>
<rect x="14" y="98" width="10" height="1" fill="#ccccff"/>
<rect x="14" y="114" width="10" height="1" fill="#ccccff"/>
<rect x="14" y="130" width="10" height="1" fill="#ccccff"/>
<rect x="14" y="146" width="10" height="1" fill="#ccccff"/>
<rect x="11" y="94" width="9" height="9" fill="#ffffff"/>
<rect x="11" y="94" width="9" height="1" fill="#000000"/>
<rect x="11" y="102" width="9" height="1" fill="#000000"/>
<rect x="11" y="94" width="1" height="9" fill="#000000"/>
<rect x="19" y="94" width="1" height="9" fill="#000000"/>
<rect x="13" y="98" width="5" height="1" fill="#000000"/>
<rect x="15" y="96" width="1" height="5" fill="#000000"/>
<rect x="11" y="142" width="9" height="9" fill="#ffffff"/>
<rect x="11" y="142" width="9" height="1" fill="#000000"/>
<rect x="11" y="150" width="9" height="1" fill="#000000"/>
<rect x="11" y="142" width="1" height="9" fill="#000000"/>
<rect x="19" y="142" width="1" height="9" fill="#000000"/>
<rect x="13" y="146" width="5" height="1" fill="#000000"/>
<rect x="15" y="144" width="1" height="5" fill="#000000"/>
<rect x="29" y="92" width="5" height="1" fill="#c8c858"/>
<rect x="28" y="93" width="7" height="1" fill="#c8c858"/>
<rect x="34" y="93" width="1" height="1" fill="#545438"/>
<rect x="33" y="92" width="1" height="1" fill="#8c8c50"/>
<rect x="29" y="93" width="4" height="1" fill="#f0e888"/>
<rect x="27" y="94" width="15" height="10" fill="#f8f078"/>
<rect x="27" y="94" width="15" height="1" fill="#c8c858"/>
<rect x="27" y="94" width="1" height="10" fill="#c8c858"/>
<rect x="41" y="94" width="1" height="10" fill="#c8c858"/>
<rect x="27" y="103" width="15" height="1" fill="#c8c858"/>
<rect x="28" y="95" width="13" height="1" fill="#ffffff"/>
<rect x="28" y="95" width="1" height="8" fill="#ffffff"/>
<rect x="31" y="97" width="1" height="1" fill="#e0d864"/>
<rect x="34" y="97" width="1" height="1" fill="#e0d864"/>
<rect x="37" y="97" width="1" height="1" fill="#e0d864"/>
<rect x="30" y="99" width="1" height="1" fill="#e0d864"/>
<rect x="33" y="99" width="1" height="1" fill="#e0d864"/>
<rect x="36" y="99" width="1" height="1" fill="#e0d864"/>
<rect x="39" y="99" width="1" height="1" fill="#e0d864"/>
<rect x="31" y="101" width="1" height="1" fill="#e0d864"/>
<rect x="34" y="101" width="1" height="1" fill="#e0d864"/>
<rect x="37" y="101" width="1" height="1" fill="#e0d864"/>
<rect x="42" y="95" width="1" height="10" fill="#545438"/>
<rect x="28" y="104" width="15" height="1" fill="#545438"/>
<rect x="29" y="108" width="5" height="1" fill="#c8c858"/>
<rect x="28" y="109" width="7" height="1" fill="#c8c858"/>
<rect x="34" y="109" width="1" height="1" fill="#545438"/>
<rect x="33" y="108" width="1" height="1" fill="#8c8c50"/>
<rect x="29" y="109" width="4" height="1" fill="#f0e888"/>
<rect x="27" y="110" width="15" height="10" fill="#f8f078"/>
<rect x="27" y="110" width="15" height="1" fill="#c8c858"/>
<rect x="27" y="110" width="1" height="10" fill="#c8c858"/>
<rect x="41" y="110" width="1" height="10" fill="#c8c858"/>
<rect x="27" y="119" width="15" height="1" fill="#c8c858"/>
<rect x="28" y="111" width="13" height="1" fill="#ffffff"/>
<rect x="28" y="111" width="1" height="8" fill="#ffffff"/>
<rect x="31" y="113" width="1" height="1" fill="#e0d864"/>
<rect x="34" y="113" width="1" height="1" fill="#e0d864"/>
<rect x="37" y="113" width="1" height="1" fill="#e0d864"/>
<rect x="30" y="115" width="1" height="1" fill="#e0d864"/>
<rect x="33" y="115" width="1" height="1" fill="#e0d864"/>
<rect x="36" y="115" width="1" height="1" fill="#e0d864"/>
<rect x="39" y="115" width="1" height="1" fill="#e0d864"/>
<rect x="31" y="117" width="1" height="1" fill="#e0d864"/>
<rect x="34" y="117" width="1" height="1" fill="#e0d864"/>
<rect x="37" y="117" width="1" height="1" fill="#e0d864"/>
<rect x="42" y="111" width="1" height="10" fill="#545438"/>
<rect x="28" y="120" width="15" height="1" fill="#545438"/>
<rect x="29" y="124" width="5" height="1" fill="#c8c858"/>
<rect x="28" y="125" width="7" height="1" fill="#c8c858"/>
<rect x="34" y="125" width="1" height="1" fill="#545438"/>
<rect x="33" y="124" width="1" height="1" fill="#8c8c50"/>
<rect x="29" y="125" width="4" height="1" fill="#f0e888"/>
<rect x="27" y="126" width="15" height="10" fill="#f8f078"/>
<rect x="27" y="126" width="15" height="1" fill="#c8c858"/>
<rect x="27" y="126" width="1" height="10" fill="#c8c858"/>
<rect x="41" y="126" width="1" height="10" fill="#c8c858"/>
<rect x="27" y="135" width="15" height="1" fill="#c8c858"/>
<rect x="28" y="127" width="13" height="1" fill="#ffffff"/>
<rect x="28" y="127" width="1" height="8" fill="#ffffff"/>
<rect x="31" y="129" width="1" height="1" fill="#e0d864"/>
<rect x="34" y="129" width="1" height="1" fill="#e0d864"/>
<rect x="37" y="129" width="1" height="1" fill="#e0d864"/>
<rect x="30" y="131" width="1" height="1" fill="#e0d864"/>
<rect x="33" y="131" width="1" height="1" fill="#e0d864"/>
<rect x="36" y="131" width="1" height="1" fill="#e0d864"/>
<rect x="39" y="131" width="1" height="1" fill="#e0d864"/>
<rect x="31" y="133" width="1" height="1" fill="#e0d864"/>
<rect x="34" y="133" width="1" height="1" fill="#e0d864"/>
<rect x="37" y="133" width="1" height="1" fill="#e0d864"/>
<rect x="42" y="127" width="1" height="10" fill="#545438"/>
<rect x="28" y="136" width="15" height="1" fill="#545438"/>
<rect x="29" y="140" width="5" height="1" fill="#c8c858"/>
<rect x="28" y="141" width="7" height="1" fill="#c8c858"/>
<rect x="34" y="141" width="1" height="1" fill="#545438"/>
<rect x="33" y="140" width="1" height="1" fill="#8c8c50"/>
<rect x="29" y="141" width="4" height="1" fill="#f0e888"/>
<rect x="27" y="142" width="15" height="10" fill="#f8f078"/>
<rect x="27" y="142" width="15" height="1" fill="#c8c858"/>
<rect x="27" y="142" width="1" height="10" fill="#c8c858"/>
<rect x="41" y="142" width="1" height="10" fill="#c8c858"/>
<rect x="27" y="151" width="15" height="1" fill="#c8c858"/>
<rect x="28" y="143" width="13" height="1" fill="#ffffff"/>
<rect x="28" y="143" width="1" height="8" fill="#ffffff"/>
<rect x="31" y="145" width="1" height="1" fill="#e0d864"/>
<rect x="34" y="145" width="1" height="1" fill="#e0d864"/>
<rect x="37" y="145" width="1" height="1" fill="#e0d864"/>
<rect x="30" y="147" width="1" height="1" fill="#e0d864"/>
<rect x="33" y="147" width="1" height="1" fill="#e0d864"/>
<rect x="36" y="147" width="1" height="1" fill="#e0d864"/>
<rect x="39" y="147" width="1" height="1" fill="#e0d864"/>
<rect x="31" y="149" width="1" height="1" fill="#e0d864"/>
<rect x="34" y="149" width="1" height="1" fill="#e0d864"/>
<rect x="37" y="149" width="1" height="1" fill="#e0d864"/>
<rect x="42" y="143" width="1" height="10" fill="#545438"/>
<rect x="28" y="152" width="15" height="1" fill="#545438"/>
<rect x="10" y="76" width="5" height="1" fill="#c8c858"/>
<rect x="9" y="77" width="7" height="1" fill="#c8c858"/>
<rect x="15" y="77" width="1" height="1" fill="#545438"/>
<rect x="10" y="77" width="4" height="1" fill="#f0e888"/>
<rect x="8" y="78" width="14" height="10" fill="#dcd868"/>
<rect x="8" y="78" width="14" height="1" fill="#c8c858"/>
<polygon points="7,81 18,81 22,88 10,88" fill="#f8f078"/>
<rect x="8" y="81" width="10" height="1" fill="#ffffff"/>
<rect x="8" y="82" width="1" height="1" fill="#ffffff"/>
<rect x="8" y="83" width="1" height="1" fill="#ffffff"/>
<rect x="9" y="84" width="1" height="1" fill="#ffffff"/>
<rect x="9" y="85" width="1" height="1" fill="#ffffff"/>
<rect x="10" y="86" width="1" height="1" fill="#ffffff"/>
<rect x="10" y="87" width="1" height="1" fill="#ffffff"/>
<rect x="19" y="80" width="1" height="1" fill="#505060"/>
<rect x="19" y="81" width="1" height="1" fill="#505060"/>
<rect x="20" y="82" width="1" height="1" fill="#505060"/>
<rect x="20" y="83" width="1" height="1" fill="#505060"/>
<rect x="21" y="84" width="1" height="1" fill="#505060"/>
<rect x="21" y="85" width="1" height="1" fill="#505060"/>
<rect x="22" y="86" width="1" height="1" fill="#505060"/>
<rect x="12" y="84" width="1" height="1" fill="#e0d864"/>
<rect x="15" y="84" width="1" height="1" fill="#e0d864"/>
<rect x="14" y="85" width="1" height="1" fill="#e0d864"/>
<rect x="17" y="85" width="1" height="1" fill="#e0d864"/>
<rect x="11" y="83" width="1" height="1" fill="#e0d864"/>
<rect x="16" y="83" width="1" height="1" fill="#e0d864"/>
<rect x="12" y="84" width="1" height="1" fill="#a8a8a0"/>
<rect x="15" y="84" width="1" height="1" fill="#a8a8a0"/>
<rect x="22" y="79" width="1" height="10" fill="#545438"/>
<rect x="10" y="88" width="13" height="1" fill="#545438"/>
<rect x="10" y="87" width="12" height="1" fill="#c8c858"/>
<g fill="none" stroke="#000" stroke-width="1" shape-rendering="geometricPrecision">
<circle cx="241.5" cy="118.5" r="5"/>
<path d="M241.5,124 V144 M231,133.5 H252 M241.5,143.5 L231.5,153.5 M241.5,143.5 L251.5,153.5"/>
<rect x="236.5" y="163.5" width="10" height="200" fill="#fff"/>
<rect x="361.5" y="133.5" width="41" height="20" fill="#fff"/>
<path d="M381.5,153 V358" stroke-dasharray="5 5"/>
<rect x="376.5" y="188.5" width="10" height="125" fill="#fff"/>
<rect x="380.5" y="213.5" width="10" height="75" fill="#fff"/>
<rect x="384.5" y="238.5" width="10" height="25" fill="#fff"/>
<path d="M247,188.5 H376"/>
<path d="M247,313.5 H376" stroke-dasharray="5 5"/>
</g>
<g fill="#000" stroke="none" shape-rendering="geometricPrecision">
<polygon points="377,188.5 366,184 366,193"/>
<polygon points="390,213.5 401,209 401,218"/>
<polygon points="394,238.5 405,234 405,243"/>
<rect x="366" y="150" width="31" height="1" shape-rendering="crispEdges"/>
</g>
<g fill="none" stroke="#000" stroke-width="1" shape-rendering="geometricPrecision">
<path d="M390.5,213.5 C445.5,213.5 445.5,205.5 390.5,205.5"/>
<path d="M394.5,238.5 C449.5,238.5 449.5,230.5 394.5,230.5"/>
<path d="M394.5,271.5 C449.5,271.5 449.5,263.5 394.5,263.5" stroke-dasharray="5 5"/>
<path d="M390.5,271.5 H394.5"/>
<path d="M390.5,296.5 C445.5,296.5 445.5,288.5 390.5,288.5" stroke-dasharray="5 5"/>
<path d="M386.5,296.5 H390.5"/>
<path d="M400.5,268.5 L390.5,271.5 L400.5,274.5"/>
<path d="M396.5,293.5 L386.5,296.5 L396.5,299.5"/>
<path d="M257.5,310.5 L247.5,313.5 L257.5,316.5"/>
</g>
<rect x="3" y="512" width="800" height="8" fill="#cccccc"/>
<rect x="30" y="514" width="770" height="4" fill="url(#bb)"/>
<rect x="10" y="514" width="3" height="1" fill="#666699"/>
<rect x="9" y="515" width="5" height="1" fill="#666699"/>
<rect x="8" y="516" width="7" height="1" fill="#666699"/>
<rect x="10" y="513" width="1" height="1" fill="#000000"/>
<rect x="11" y="513" width="1" height="1" fill="#000000"/>
<rect x="9" y="514" width="1" height="1" fill="#000000"/>
<rect x="8" y="515" width="1" height="1" fill="#000000"/>
<rect x="7" y="516" width="1" height="1" fill="#000000"/>
<rect x="12" y="513" width="1" height="1" fill="#ffffff"/>
<rect x="13" y="514" width="1" height="1" fill="#ffffff"/>
<rect x="14" y="515" width="1" height="1" fill="#ffffff"/>
<rect x="15" y="516" width="1" height="1" fill="#ffffff"/>
<rect x="8" y="517" width="8" height="1" fill="#ffffff"/>
<rect x="19" y="513" width="8" height="1" fill="#000000"/>
<rect x="20" y="514" width="6" height="1" fill="#666699"/>
<rect x="21" y="515" width="4" height="1" fill="#666699"/>
<rect x="22" y="516" width="2" height="1" fill="#666699"/>
<rect x="26" y="514" width="1" height="1" fill="#ffffff"/>
<rect x="25" y="515" width="1" height="1" fill="#ffffff"/>
<rect x="24" y="516" width="1" height="1" fill="#ffffff"/>
<rect x="23" y="517" width="1" height="1" fill="#ffffff"/>
<rect x="22" y="517" width="1" height="1" fill="#ffffff"/>
<rect x="3" y="520" width="800" height="1" fill="#666666"/>
<rect x="3" y="536" width="798" height="67" fill="#666666"/>
<rect x="5" y="537" width="795" height="65" fill="#ffffff"/>
<rect x="801" y="537" width="1" height="68" fill="#ffffff"/>
<rect x="802" y="521" width="1" height="84" fill="#ffffff"/>
<rect x="3" y="603" width="800" height="1" fill="#ffffff"/>
<rect x="3" y="604" width="800" height="1" fill="#ffffff"/>
<rect x="3" y="521" width="799" height="15" fill="#cccccc"/>
<rect x="3" y="603" width="1" height="2" fill="#ffffff"/>
<rect x="759" y="9" width="5" height="1" fill="#1a70a6"/>
<rect x="759" y="9" width="1" height="5" fill="#1a70a6"/>
<rect x="760" y="13" width="4" height="1" fill="#000000"/>
<rect x="763" y="10" width="1" height="4" fill="#000000"/>
<rect x="778" y="4" width="1" height="1" fill="#1a70a6"/>
<rect x="778" y="17" width="1" height="1" fill="#1a70a6"/>
<rect x="777" y="5" width="1" height="1" fill="#1a70a6"/>
<rect x="777" y="16" width="1" height="1" fill="#1a70a6"/>
<rect x="776" y="6" width="1" height="1" fill="#1a70a6"/>
<rect x="776" y="15" width="1" height="1" fill="#1a70a6"/>
<rect x="775" y="7" width="1" height="1" fill="#1a70a6"/>
<rect x="775" y="14" width="1" height="1" fill="#1a70a6"/>
<rect x="774" y="8" width="1" height="1" fill="#1a70a6"/>
<rect x="774" y="13" width="1" height="1" fill="#1a70a6"/>
<rect x="779" y="5" width="1" height="1" fill="#000000"/>
<rect x="779" y="16" width="1" height="1" fill="#000000"/>
<rect x="780" y="6" width="1" height="1" fill="#000000"/>
<rect x="780" y="15" width="1" height="1" fill="#000000"/>
<rect x="781" y="7" width="1" height="1" fill="#000000"/>
<rect x="781" y="14" width="1" height="1" fill="#000000"/>
<rect x="782" y="8" width="1" height="1" fill="#000000"/>
<rect x="782" y="13" width="1" height="1" fill="#000000"/>
<rect x="778" y="17" width="1" height="1" fill="#000000"/>
<rect x="774" y="8" width="3" height="1" fill="#1a70a6"/>
<rect x="779" y="8" width="4" height="1" fill="#000000"/>
<rect x="774" y="13" width="3" height="1" fill="#1a70a6"/>
<rect x="779" y="13" width="4" height="1" fill="#000000"/>
<rect x="776" y="8" width="1" height="6" fill="#1a70a6"/>
<rect x="779" y="8" width="1" height="6" fill="#000000"/>
<rect x="792" y="6" width="1" height="1" fill="#1a70a6"/>
<rect x="790" y="8" width="1" height="1" fill="#000000"/>
<rect x="798" y="6" width="1" height="1" fill="#1a70a6"/>
<rect x="800" y="8" width="1" height="1" fill="#000000"/>
<rect x="793" y="7" width="1" height="1" fill="#1a70a6"/>
<rect x="791" y="9" width="1" height="1" fill="#000000"/>
<rect x="797" y="7" width="1" height="1" fill="#1a70a6"/>
<rect x="799" y="9" width="1" height="1" fill="#000000"/>
<rect x="794" y="8" width="1" height="1" fill="#1a70a6"/>
<rect x="792" y="10" width="1" height="1" fill="#000000"/>
<rect x="796" y="8" width="1" height="1" fill="#1a70a6"/>
<rect x="798" y="10" width="1" height="1" fill="#000000"/>
<rect x="795" y="9" width="1" height="1" fill="#1a70a6"/>
<rect x="793" y="11" width="1" height="1" fill="#000000"/>
<rect x="795" y="9" width="1" height="1" fill="#1a70a6"/>
<rect x="797" y="11" width="1" height="1" fill="#000000"/>
<rect x="796" y="10" width="1" height="1" fill="#1a70a6"/>
<rect x="794" y="12" width="1" height="1" fill="#000000"/>
<rect x="794" y="10" width="1" height="1" fill="#1a70a6"/>
<rect x="796" y="12" width="1" height="1" fill="#000000"/>
<rect x="797" y="11" width="1" height="1" fill="#1a70a6"/>
<rect x="795" y="13" width="1" height="1" fill="#000000"/>
<rect x="793" y="11" width="1" height="1" fill="#1a70a6"/>
<rect x="795" y="13" width="1" height="1" fill="#000000"/>
<rect x="798" y="12" width="1" height="1" fill="#1a70a6"/>
<rect x="796" y="14" width="1" height="1" fill="#000000"/>
<rect x="792" y="12" width="1" height="1" fill="#1a70a6"/>
<rect x="794" y="14" width="1" height="1" fill="#000000"/>
<rect x="799" y="13" width="1" height="1" fill="#1a70a6"/>
<rect x="797" y="15" width="1" height="1" fill="#000000"/>
<rect x="791" y="13" width="1" height="1" fill="#1a70a6"/>
<rect x="793" y="15" width="1" height="1" fill="#000000"/>
<rect x="800" y="14" width="1" height="1" fill="#1a70a6"/>
<rect x="798" y="16" width="1" height="1" fill="#000000"/>
<rect x="790" y="14" width="1" height="1" fill="#1a70a6"/>
<rect x="792" y="16" width="1" height="1" fill="#000000"/>
<rect x="790" y="6" width="3" height="1" fill="#1a70a6"/>
<rect x="790" y="7" width="1" height="1" fill="#1a70a6"/>
<rect x="798" y="6" width="3" height="1" fill="#1a70a6"/>
<rect x="800" y="7" width="1" height="1" fill="#000000"/>
<rect x="790" y="16" width="3" height="1" fill="#000000"/>
<rect x="790" y="15" width="1" height="1" fill="#1a70a6"/>
<rect x="798" y="16" width="3" height="1" fill="#000000"/>
<rect x="800" y="15" width="1" height="1" fill="#000000"/>
<rect x="9" y="36" width="6" height="1" fill="#000000"/>
<rect x="38" y="36" width="6" height="1" fill="#000000"/>
<rect x="67" y="36" width="7" height="1" fill="#000000"/>
<rect x="104" y="36" width="8" height="1" fill="#000000"/>
<rect x="143" y="36" width="7" height="1" fill="#000000"/>
<g font-family="Liberation Sans, sans-serif" text-rendering="geometricPrecision" style="white-space:pre">
<text font-size="12.5" fill="#fff" transform="translate(29.5,15) scale(0.69,1)">USE</text>
<text font-size="11" fill="#000" letter-spacing="-0.3" x="8.2" y="34">File</text>
<text font-size="11" fill="#000" letter-spacing="-0.6" x="37.2" y="34">Edit</text>
<text font-size="11" fill="#000" x="66.3" y="34">State</text>
<text font-size="11" fill="#000" letter-spacing="0.67" x="103.6" y="34">View</text>
<text font-size="11" fill="#000" letter-spacing="-0.3" x="142" y="34">Help</text>
<text font-size="12.5" fill="#000" font-weight="bold" transform="translate(79.6,60) scale(0.5,1)">OCL</text>
<text font-size="13.5" fill="#000" letter-spacing="0.216" transform="translate(27,86) scale(0.926,1)">NestedOperationCalls</text>
<text font-size="13.5" fill="#000" letter-spacing="0.432" transform="translate(47,102) scale(0.926,1)">Classes</text>
<text font-size="13.5" fill="#000" letter-spacing="0.454" transform="translate(47,118) scale(0.926,1)">Associations</text>
<text font-size="13.5" fill="#000" letter-spacing="-0.108" transform="translate(48,134) scale(0.926,1)">Invariants</text>
<text font-size="13.5" fill="#000" letter-spacing="0.367" transform="translate(47,150) scale(0.926,1)">Pre-/Postconditions</text>
<text font-size="11" fill="#000" letter-spacing="-0.13" x="245" y="92">Sequence diagram</text>
<text font-size="13.5" fill="#000" letter-spacing="0.508" transform="translate(365.5,148) scale(0.926,1)">r:Rec</text>
<text font-size="13.5" fill="#000" letter-spacing="0.281" transform="translate(294.5,186) scale(0.926,1)">fac(3)</text>
<text font-size="13.5" fill="#000" letter-spacing="0.281" transform="translate(400.5,203) scale(0.926,1)">fac(2)</text>
<text font-size="13.5" fill="#000" letter-spacing="0.281" transform="translate(404.5,228) scale(0.926,1)">fac(1)</text>
<text font-size="13.5" fill="#000" transform="translate(409,261) scale(0.926,1)">1</text>
<text font-size="13.5" fill="#000" transform="translate(404.8,286) scale(0.926,1)">2</text>
<text font-size="13.5" fill="#000" transform="translate(306.3,311) scale(0.926,1)">6</text>
<text font-size="11" fill="#666699" x="6" y="532">Log</text>
<text font-size="13.5" fill="#000" letter-spacing="0.356" transform="translate(5,549) scale(0.926,1)">checking structure...</text>
<text font-size="13.5" fill="#000" letter-spacing="0.324" transform="translate(5,565) scale(0.926,1)">checking structure, ok.</text>
<text font-size="11" fill="#666699" x="2.3" y="616">Ready.</text>
</g>
</svg>
</div>
</body></html>
